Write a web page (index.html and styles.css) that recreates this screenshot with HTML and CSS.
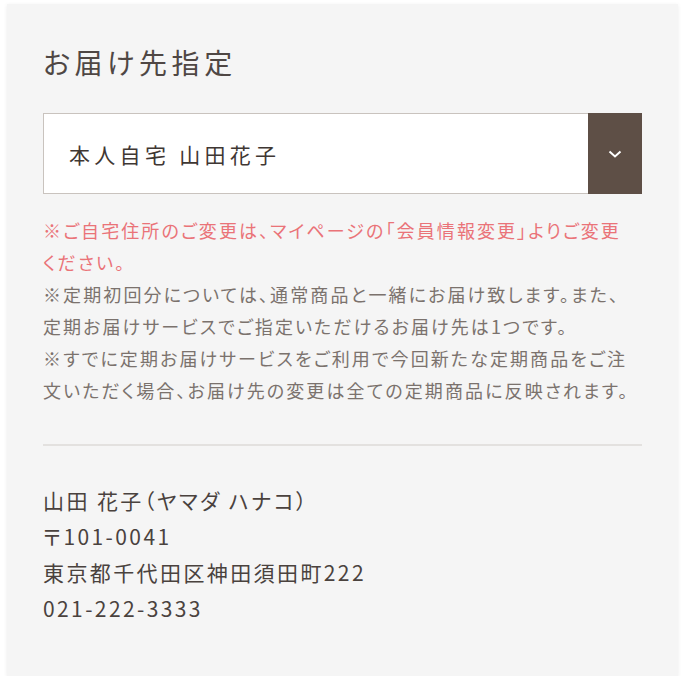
FILE: index.html
```html
<!DOCTYPE html>
<html lang="ja">
<head>
    <meta charset="UTF-8">
    <meta name="viewport" content="width=device-width, initial-scale=1.0">
    <title>お届け先指定</title>
    <link rel="stylesheet" href="styles.css">
</head>
<body>
    <div class="card">
        <h2 class="title">お届け先指定</h2>

        <div class="select">
            <div class="select-value">本人自宅 山田花子</div>
            <div class="select-btn">
                <svg width="14" height="8" viewBox="0 0 14 8">
                    <path d="M1.5 1.5 L7 6.5 L12.5 1.5" fill="none" stroke="#fff" stroke-width="2"/>
                </svg>
            </div>
        </div>

        <div class="notes">
            <p class="note-alert">※ご自宅住所のご変更は、マイページの「会員情報変更」よりご変更<br>ください。</p>
            <p>※定期初回分については、通常商品と一緒にお届け致します。また、<br>定期お届けサービスでご指定いただけるお届け先は1つです。</p>
            <p>※すでに定期お届けサービスをご利用で今回新たな定期商品をご注文いただく場合、お届け先の変更は全ての定期商品に反映されます。</p>
        </div>

        <div class="address">
            <p>山田 花子（ヤマダ ハナコ）</p>
            <p>〒101-0041</p>
            <p>東京都千代田区神田須田町222</p>
            <p>021-222-3333</p>
        </div>
    </div>
</body>
</html>
```

FILE: styles.css
```css
body {
    margin: 0;
    background: #fff;
    font-family: "Noto Sans CJK JP", "Noto Sans", sans-serif;
    font-feature-settings: "palt";
}

.card {
    margin: 4px 8px 0 7px;
    padding: 38px 36px 50px;
    background: #f5f5f5;
    box-shadow: 0 1px 4px rgba(0, 0, 0, 0.08);
}

.title {
    margin: 0;
    color: #4f4744;
    font-size: 28px;
    font-weight: 400;
    line-height: 40px;
    letter-spacing: 4.6px;
}

.select {
    display: flex;
    height: 81px;
    margin-top: 31px;
    background: #fff;
    border: 1px solid #c9c3be;
    box-sizing: border-box;
}

.select-value {
    flex: 1;
    display: flex;
    align-items: center;
    padding-left: 25px;
    color: #3f3733;
    font-size: 21px;
    letter-spacing: 4.3px;
}

.select-btn {
    width: 54px;
    margin: -1px -1px -1px 0;
    background: #5e4f46;
    display: flex;
    align-items: center;
    justify-content: center;
}

.notes {
    margin-top: 20px;
    padding-bottom: 38px;
    border-bottom: 2px solid #e3e1df;
}

.notes p {
    margin: 0;
    color: #7b726d;
    font-size: 18px;
    line-height: 32px;
    letter-spacing: 2.1px;
}

.notes .note-alert {
    color: #ea7378;
}

.address {
    padding-top: 36px;
}

.address p {
    margin: 0;
    color: #4a423e;
    font-size: 21px;
    line-height: 36px;
    letter-spacing: 2.4px;
}
```
